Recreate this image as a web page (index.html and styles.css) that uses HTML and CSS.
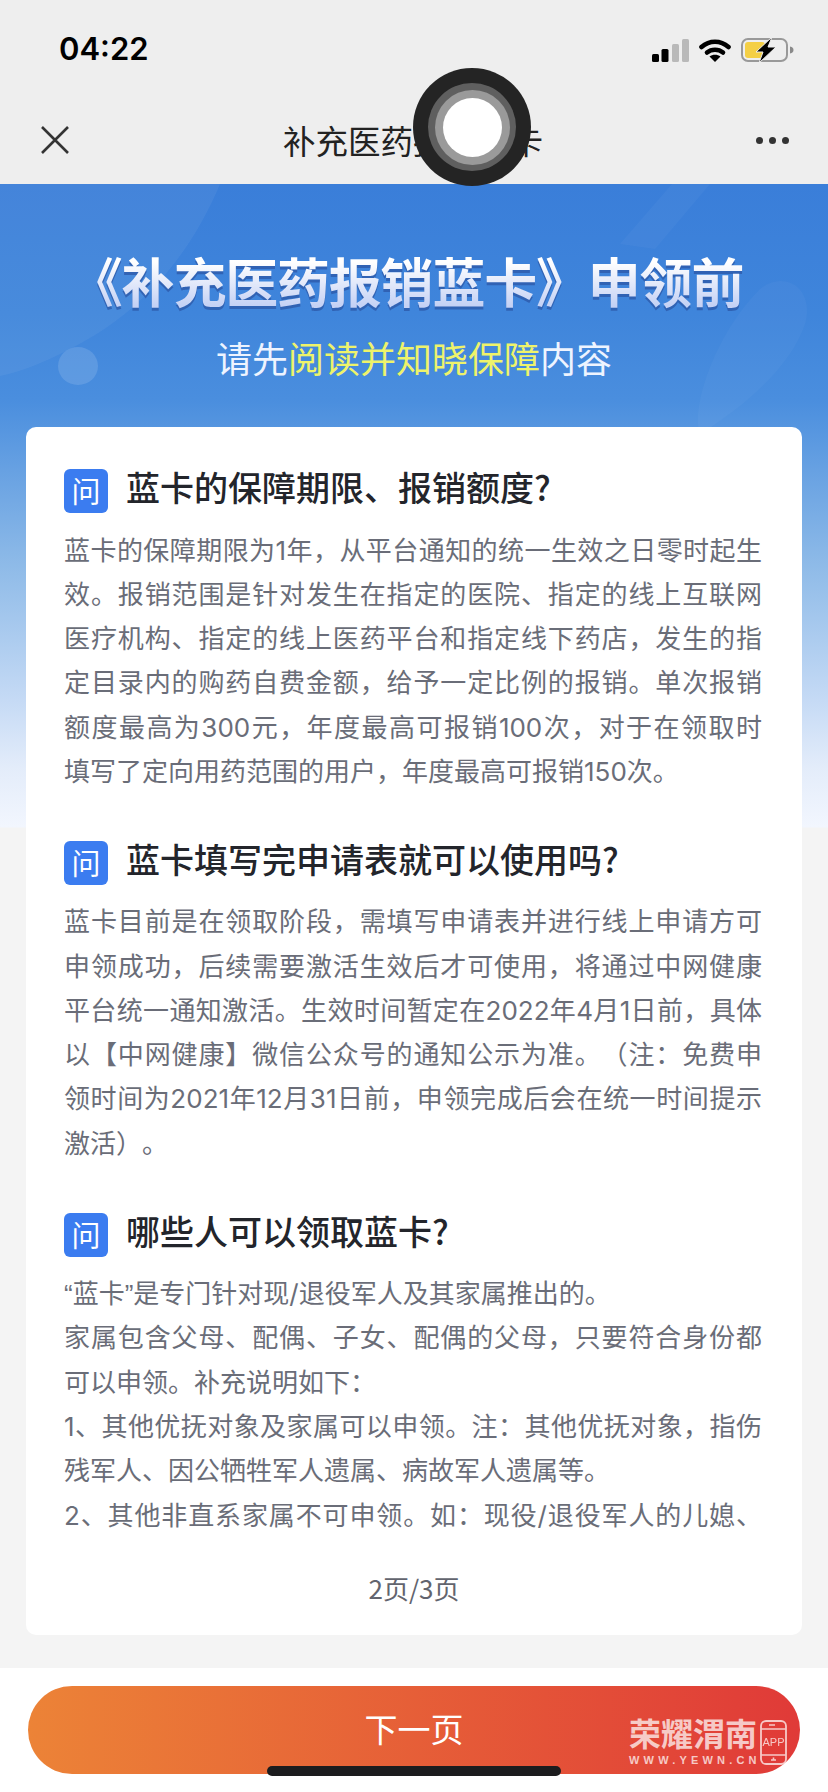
FILE: index.html
```html
<!DOCTYPE html>
<html lang="zh-CN">
<head>
    <meta charset="UTF-8">
    <meta name="viewport" content="width=device-width, initial-scale=1.0">
    <title>补充医药报销蓝卡</title>
    <link rel="stylesheet" href="styles.css">
</head>
<body>

    <div class="phone">
        <div class="status-bar">
            <span class="time">04:22</span>
            <div class="status-icons">
                <svg width="37" height="23" viewBox="0 0 37 23">
                    <rect x="0" y="15" width="7" height="8" rx="1.5" fill="#000"/>
                    <rect x="9.5" y="10" width="7" height="13" rx="1.5" fill="#000"/>
                    <rect x="20" y="5" width="7" height="18" rx="1.5" fill="#b9b9b9"/>
                    <rect x="30" y="0" width="7" height="23" rx="1.5" fill="#b9b9b9"/>
                </svg>
                <svg width="32" height="23" viewBox="0 0 32 23">
                    <path d="M2.5 8C10.5 1 21.5 1 29.5 8" fill="none" stroke="#000" stroke-width="4.6" stroke-linecap="round"/>
                    <path d="M8 13.6C12.5 9.8 19.5 9.8 24 13.6" fill="none" stroke="#000" stroke-width="4.6" stroke-linecap="round"/>
                    <path d="M16 23L10.5 17.6C13.6 15 18.4 15 21.5 17.6Z" fill="#000"/>
                </svg>
                <svg width="54" height="26" viewBox="0 0 54 26">
                    <rect x="1" y="2" width="45" height="22" rx="6" fill="none" stroke="#999" stroke-width="2"/>
                    <rect x="4" y="5" width="20" height="16" rx="3" fill="#f4cf45"/>
                    <path d="M49 9.5C51.5 10 52.5 11.4 52.5 13C52.5 14.6 51.5 16 49 16.5Z" fill="#8a8a8a"/>
                    <path d="M31 0L15 15H22L18 26L35 10H27Z" fill="#000" stroke="#eee" stroke-width="1"/>
                </svg>
            </div>
        </div>

        <div class="nav">
            <svg class="nav-close" width="30" height="28" viewBox="0 0 30 28">
                <path d="M2 1L28 27M28 1L2 27" fill="none" stroke="#333" stroke-width="2.6"/>
            </svg>
            <span class="nav-title">补充医药报销蓝卡</span>
            <div class="nav-more"><i></i><i></i><i></i></div>
        </div>

        <div class="main">
            <!-- background shapes of the blue header -->
            <svg class="hero-shapes" width="828" height="320" viewBox="0 0 828 320">
                <path d="M0 0H220C195 60 150 125 70 165C45 178 20 188 0 192Z" fill="#fff" opacity="0.05"/>
                <path d="M672 0H710L655 65L620 60Z" fill="#fff" opacity="0.03"/>
                <path d="M760 105C785 85 815 105 805 140C790 185 740 225 700 250C690 225 715 150 760 105Z" fill="#fff" opacity="0.03"/>
                <ellipse cx="78" cy="182" rx="20" ry="19" fill="#fff" opacity="0.13"/>
            </svg>

            <div class="hero">
                <h1 class="hero-title">《补充医药报销蓝卡》申领前</h1>
                <p class="hero-sub">请先<span class="hl">阅读并知晓保障</span>内容</p>
            </div>

            <div class="card">
                <div class="faq">
                    <div class="faq-item">
                        <div class="faq-head">
                            <span class="faq-badge">问</span>
                            <h3>蓝卡的保障期限、报销额度?</h3>
                        </div>
                        <p>蓝卡的保障期限为1年，从平台通知的统一生效之日零时起生效。报销范围是针对发生在指定的医院、指定的线上互联网医疗机构、指定的线上医药平台和指定线下药店，发生的指定目录内的购药自费金额，给予一定比例的报销。单次报销额度最高为300元，年度最高可报销100次，对于在领取时<span class="keep">填写</span>了定向用药范围的用户，年度最高可报销150次。</p>
                    </div>
                    <div class="faq-item">
                        <div class="faq-head">
                            <span class="faq-badge">问</span>
                            <h3>蓝卡填写完申请表就可以使用吗?</h3>
                        </div>
                        <p>蓝卡目前是在领取阶段，需填写申请表并进行线上申请方可申领成功，后续需要激活生效后才可使用，将通过中网健康平台统一通知激活。生效时间暂定在2022年4月1日前，具体以【中网健康】微信公众号的通知公示为准。（注：免费申领时间为2021年12月31日前，申领完成后会在统一时间提示激活）。</p>
                    </div>
                    <div class="faq-item">
                        <div class="faq-head">
                            <span class="faq-badge">问</span>
                            <h3>哪些人可以领取蓝卡?</h3>
                        </div>
                        <p><span class="quote">“</span>蓝卡<span class="quote">”</span>是专门针对现/退役军人及其家属推出的。</p>
                        <p>家属包含父母、配偶、子女、配偶的父母，只要符合身份都可以申领。补充说明如下：</p>
                        <p>1、其他优抚对象及家属可以申领。注：其他优抚对象，指伤残军人、因公牺牲军人遗属、病故军人遗属等。</p>
                        <p>2、其他非直系家属不可申领。如：现役/退役军人的儿媳、女婿、兄弟姐妹等。</p>
                    </div>
                </div>
                <div class="pager">2页/3页</div>
            </div>
        </div>

        <div class="footer">
            <button class="next-btn">下一页</button>
        </div>

        <!-- floating touch button -->
        <div class="touch-btn"><div class="touch-ring"><div class="touch-ring2"><div class="touch-dot"></div></div></div></div>

        <div class="watermark">
            <div class="wm-text">
                <div class="wm-name">荣耀渭南</div>
                <div class="wm-url">WWW.YEWN.CN</div>
            </div>
            <svg class="wm-phone" width="27" height="45" viewBox="0 0 27 45">
                <rect x="1" y="1" width="25" height="43" rx="5" fill="none" stroke="#fff" stroke-width="1.8"/>
                <path d="M1 9H26M1 35H26M9 5H15M11 40H16M13.5 37.5V40" fill="none" stroke="#fff" stroke-width="1.6"/>
                <text x="13.5" y="26" text-anchor="middle" class="wm-app">APP</text>
            </svg>
        </div>

        <div class="home-bar"></div>
    </div>

</body>
</html>
```

FILE: styles.css
```css
* {
    box-sizing: border-box;
}
body {
    margin: 0;
    background-color: #fff;
    font-family: "Noto Sans CJK SC", "Noto Sans", sans-serif;
    text-spacing-trim: space-all;
}
.phone {
    position: relative;
    width: 828px;
    height: 1792px;
    overflow: hidden;
    display: flex;
    flex-direction: column;
}

/* status bar */
.status-bar {
    height: 80px;
    background-color: #eeeeee;
    display: flex;
    justify-content: space-between;
    align-items: flex-start;
    padding: 30px 33px 0 59px;
}
.time {
    font-family: Inter, Roboto, sans-serif;
    font-size: 31px;
    line-height: 38px;
    font-weight: 600;
    color: #000;
}
.status-icons {
    display: flex;
    align-items: center;
    gap: 10px;
    padding-top: 7px;
}

/* nav */
.nav {
    height: 104px;
    background-color: #eeeeee;
    display: flex;
    align-items: center;
    justify-content: space-between;
    padding: 16px 38px 0 40px;
}
.nav-title {
    font-size: 32.5px;
    line-height: 44px;
    color: #222;
}
.nav-more {
    display: flex;
    gap: 6px;
    width: 34px;
}
.nav-more i {
    width: 7px;
    height: 7px;
    border-radius: 50%;
    background-color: #333;
}

/* main */
.main {
    position: relative;
    flex: 1;
    padding: 0 26px;
    background: linear-gradient(180deg, #3a7ed9 0, #3f85db 130px, #4a8ede 216px, #8fbbe8 383px, #c5daf5 516px, #e3ecfa 583px, #f2f6fe 643px, #f4f4f4 644px);
}
.hero-shapes {
    position: absolute;
    left: 0;
    top: 0;
}
.hero {
    position: relative;
    height: 243px;
    padding-top: 60px;
    text-align: center;
}
.hero-title {
    margin: 0;
    padding-right: 15px;
    font-size: 53px;
    line-height: 72px;
    font-weight: 700;
    letter-spacing: -1.2px;
    white-space: nowrap;
    color: transparent;
    background: linear-gradient(180deg, #ffffff 25%, #c5d2f5 85%);
    -webkit-background-clip: text;
    background-clip: text;
    filter: drop-shadow(0 3px 0 rgba(45, 90, 170, 0.8));
}
.hero-sub {
    margin: 15px 0 0;
    font-size: 36px;
    line-height: 52px;
    color: #eef4ff;
}
.hl {
    color: #eef36a;
}

/* card */
.card {
    position: relative;
    height: 1208px;
    background-color: #fff;
    border-radius: 10px;
    display: flex;
    flex-direction: column;
}
.faq {
    position: relative;
    height: 1123px;
    overflow: hidden;
    padding: 42px 40px 0 38px;
}
.faq::after {
    content: "";
    position: absolute;
    left: 0;
    right: 0;
    bottom: 0;
    height: 12px;
    background: linear-gradient(180deg, rgba(255, 255, 255, 0.7), #fff 70%);
}
.faq-item {
    margin-bottom: 46.5px;
}
.faq-head {
    display: flex;
    align-items: center;
    gap: 18px;
    margin-bottom: 15.5px;
}
.faq-badge {
    width: 44px;
    height: 44px;
    border-radius: 6px;
    background-color: #3b7cf0;
    color: #fff;
    font-size: 29px;
    line-height: 42px;
    text-align: center;
}
.faq-head h3 {
    margin: 0;
    padding-bottom: 8px;
    font-size: 34px;
    line-height: 36px;
    font-weight: 500;
    white-space: nowrap;
    color: #23252b;
}
.faq-item p {
    margin: 0;
    font-family: Inter, "Noto Sans CJK SC", sans-serif;
    font-size: 26px;
    line-height: 44.3px;
    color: #6a6d78;
    text-align: justify;
}
.keep {
    white-space: nowrap;
}
.quote {
    font-family: "Liberation Sans", sans-serif;
}
.pager {
    text-align: center;
    font-size: 26px;
    line-height: 34px;
    color: #62646e;
    padding-top: 21px;
}

/* footer */
.footer {
    height: 124px;
    background-color: #fff;
    padding: 18px 28px 0;
}
.next-btn {
    display: block;
    width: 100%;
    height: 88px;
    padding: 0 0 4px;
    border: none;
    border-radius: 44px;
    background: linear-gradient(90deg, #ec8337, #e03a38);
    color: #fff;
    font-family: inherit;
    font-size: 33px;
}

/* overlays */
.touch-btn {
    position: absolute;
    left: 413px;
    top: 68px;
    width: 118px;
    height: 118px;
    border-radius: 50%;
    background-color: #242424;
    display: flex;
    align-items: center;
    justify-content: center;
}
.touch-ring {
    width: 88px;
    height: 88px;
    border-radius: 50%;
    background-color: #5f5f5f;
    display: flex;
    align-items: center;
    justify-content: center;
}
.touch-ring2 {
    width: 75px;
    height: 75px;
    border-radius: 50%;
    background-color: #9a9a9a;
    display: flex;
    align-items: center;
    justify-content: center;
}
.touch-dot {
    width: 59px;
    height: 59px;
    border-radius: 50%;
    background-color: #fff;
}
.watermark {
    position: absolute;
    left: 629px;
    top: 1716px;
    display: flex;
    gap: 3px;
    color: rgba(255, 255, 255, 0.72);
}
.wm-text {
    width: 128px;
}
.wm-name {
    font-size: 32px;
    line-height: 32px;
    font-weight: 700;
    white-space: nowrap;
}
.wm-url {
    font-family: "Liberation Sans", sans-serif;
    font-size: 11px;
    line-height: 12px;
    font-weight: 700;
    letter-spacing: 4.2px;
    margin-top: 6px;
    white-space: nowrap;
}
.wm-phone {
    margin-top: 4px;
    opacity: 0.72;
}
.wm-app {
    font-family: "Liberation Sans", sans-serif;
    font-size: 11px;
    fill: #fff;
}
.home-bar {
    position: absolute;
    left: 267px;
    top: 1766px;
    width: 294px;
    height: 10px;
    border-radius: 5px;
    background-color: #1c1c1e;
}
```
